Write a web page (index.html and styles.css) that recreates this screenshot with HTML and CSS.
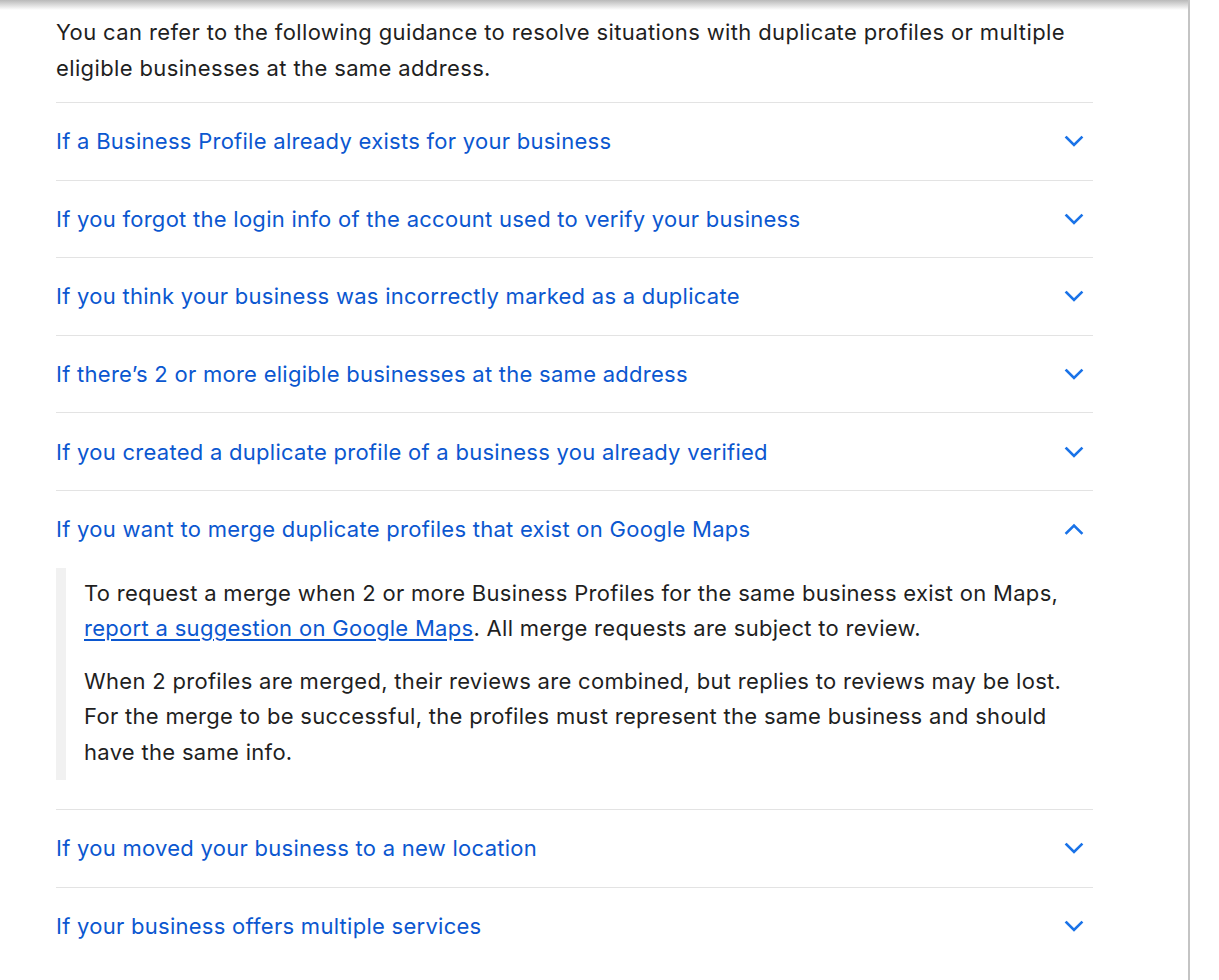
FILE: index.html
```html
<!DOCTYPE html>
<html lang="en">
<head>
<meta charset="utf-8">
<title>Duplicate profiles</title>
<link rel="stylesheet" href="styles.css">
</head>
<body>
<div class="page">
  <div class="topshadow"></div>
  <main class="article">
    <p class="intro">You can refer to the following guidance to resolve situations with duplicate profiles or multiple eligible businesses at the same address.</p>
    <div class="accordion">
      <div class="item">
        <div class="head"><span class="title">If a Business Profile already exists for your business</span><svg class="chev" viewBox="0 0 24 24"><path d="M4.5 8.5l7.5 7.5 7.5-7.5"/></svg></div>
      </div>
      <div class="item">
        <div class="head"><span class="title">If you forgot the login info of the account used to verify your business</span><svg class="chev" viewBox="0 0 24 24"><path d="M4.5 8.5l7.5 7.5 7.5-7.5"/></svg></div>
      </div>
      <div class="item">
        <div class="head"><span class="title">If you think your business was incorrectly marked as a duplicate</span><svg class="chev" viewBox="0 0 24 24"><path d="M4.5 8.5l7.5 7.5 7.5-7.5"/></svg></div>
      </div>
      <div class="item">
        <div class="head"><span class="title">If there’s 2 or more eligible businesses at the same address</span><svg class="chev" viewBox="0 0 24 24"><path d="M4.5 8.5l7.5 7.5 7.5-7.5"/></svg></div>
      </div>
      <div class="item">
        <div class="head"><span class="title">If you created a duplicate profile of a business you already verified</span><svg class="chev" viewBox="0 0 24 24"><path d="M4.5 8.5l7.5 7.5 7.5-7.5"/></svg></div>
      </div>
      <div class="item open">
        <div class="head"><span class="title">If you want to merge duplicate profiles that exist on Google Maps</span><svg class="chev" viewBox="0 0 24 24"><path d="M4.5 16l7.5-7.5 7.5 7.5"/></svg></div>
        <div class="body">
          <p>To request a merge when 2 or more Business Profiles for the same business exist on Maps, <a href="#">report a suggestion on Google Maps</a>. All merge requests are subject to review.</p>
          <p>When 2 profiles are merged, their reviews are combined, but replies to reviews may be lost. For the merge to be successful, the profiles must represent the same business and should have the same info.</p>
        </div>
      </div>
      <div class="item">
        <div class="head"><span class="title">If you moved your business to a new location</span><svg class="chev" viewBox="0 0 24 24"><path d="M4.5 8.5l7.5 7.5 7.5-7.5"/></svg></div>
      </div>
      <div class="item">
        <div class="head"><span class="title">If your business offers multiple services</span><svg class="chev" viewBox="0 0 24 24"><path d="M4.5 8.5l7.5 7.5 7.5-7.5"/></svg></div>
      </div>
    </div>
  </main>
</div>
</body>
</html>
```
FILE: styles.css
```css
html, body {
  margin: 0;
  padding: 0;
  background: #fff;
}
body {
  font-family: Inter, Roboto, "Liberation Sans", Arial, sans-serif;
  color: #1f1f1f;
}
.page {
  width: 1188px;
  min-height: 980px;
  border-right: 2px solid #c4c4c4;
  overflow: hidden;
}
.topshadow {
  height: 10px;
  background: linear-gradient(#b9b9b9, rgba(255,255,255,0));
}
.article {
  padding: 0 95px 0 56px;
}
.intro {
  margin: 4px 0 16px;
  font-size: 22px;
  line-height: 36px;
  letter-spacing: 0.37px;
  padding-right: 10px;
}
.item {
  border-top: 1px solid #e3e3e3;
}
.head {
  height: 76.6px;
  display: flex;
  align-items: center;
  justify-content: space-between;
  padding-right: 7px;
}
.title {
  color: #0b57d0;
  font-size: 22px;
  letter-spacing: 0.27px;
}
.chev {
  width: 24px;
  height: 24px;
  flex: none;
  fill: none;
  stroke: #1a73e8;
  stroke-width: 2.6;
  stroke-linecap: square;
}
.body {
  border-left: 10px solid #f1f1f1;
  padding: 8px 20px 10px 18px;
  margin-bottom: 29px;
}
.body p {
  margin: 0;
  font-size: 22px;
  line-height: 35.5px;
  letter-spacing: 0.3px;
}
.body p + p {
  margin-top: 17px;
}
.body a {
  color: #0b57d0;
  text-decoration: underline;
  text-underline-offset: 3px;
}
```
